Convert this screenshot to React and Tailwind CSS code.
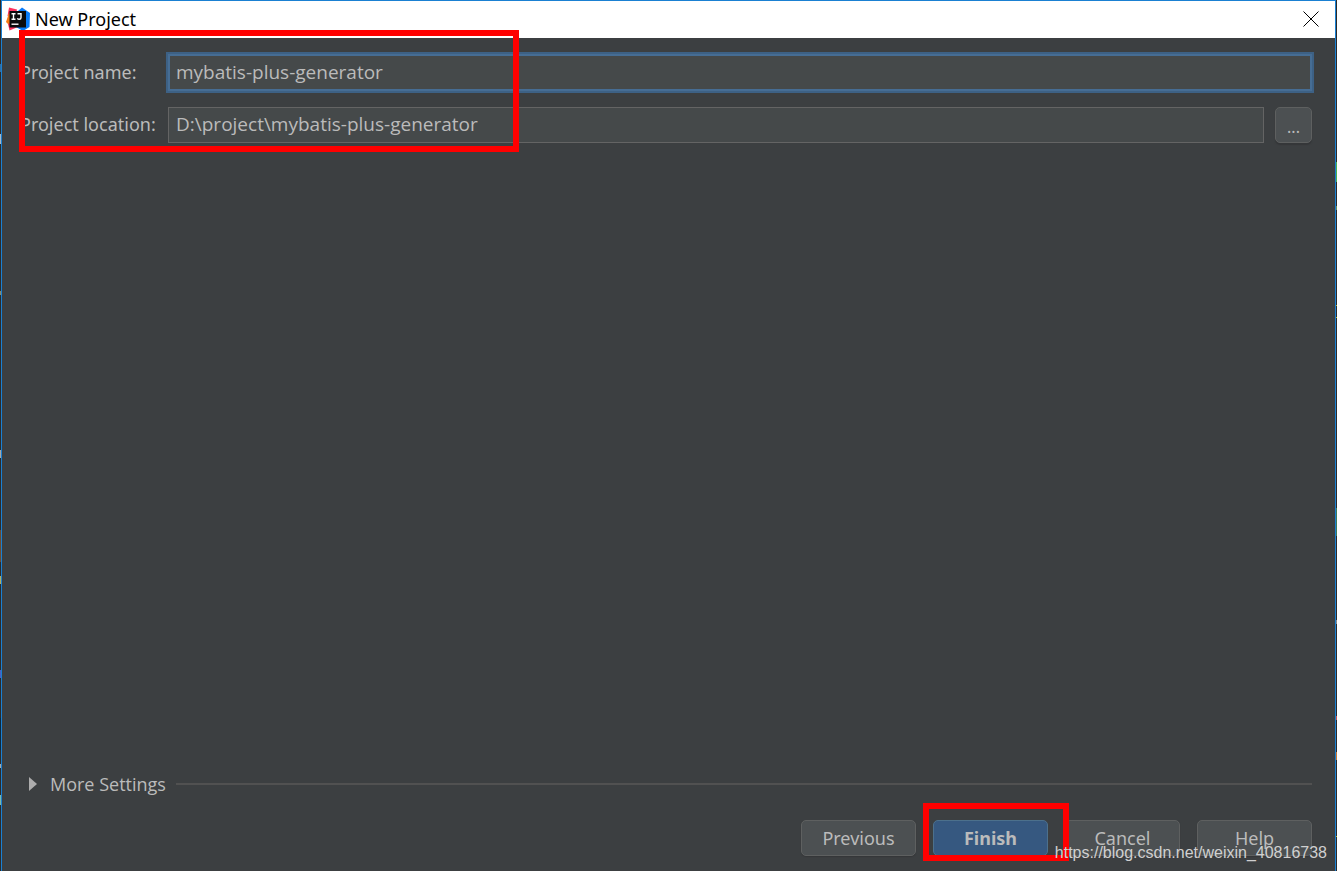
const LEFT_SPECKS = [
  'top-16 h-2 bg-[#2f6ea5]',
  'top-[134px] h-2.5 bg-[#a9b7c6]',
  'top-[291px] h-1 bg-[#8a8a6a]',
  'top-[450px] h-2 bg-[#a9a9a9]',
  'top-[530px] h-8 bg-[#6b4a2f]',
  'top-[576px] h-2 bg-[#b3ae60]',
  'top-[670px] h-2 bg-[#4a5fc4]',
  'top-[718px] h-8 bg-[#0d293e]',
  'top-[764px] h-1 bg-[#a9a9a9]',
  'top-[795px] h-2.5 bg-[#7fb8a8]',
];

const RIGHT_SPECKS = [
  'top-[162px] h-5 bg-[#4caf50]',
  'top-[206px] h-1 bg-[#6a8759]',
  'top-[305px] h-px bg-[#bbb529]',
  'top-[317px] h-px bg-[#bbb529]',
  'top-[508px] h-7 bg-[#3f7a5b]',
  'top-[620px] h-1 bg-[#8a8a8a]',
  'top-[716px] h-1 bg-[#c75450]',
  'top-[752px] h-2 bg-[#cc7832]',
  'top-[836px] h-px bg-[#bbb529]',
];

function IdeaLogo() {
  return (
    <svg width="24" height="24" viewBox="0 0 24 24" aria-hidden="true">
      <path d="M3 0.5 L11 2.5 L9 12 L1.5 9 Z" fill="#fe315d" />
      <path d="M3 6 L0 15 L5 20 L10 12 Z" fill="#f97a12" />
      <path d="M2 17 L3.5 23.5 L12 20 L8 14 Z" fill="#fe315d" />
      <path d="M12 4 L16 0.5 L24 6 L23.5 20 L17 24 L10 20 Z" fill="#087cfa" />
      <rect x="3.5" y="4" width="16.5" height="16.5" fill="#0b0b0d" />
      <path
        d="M5.5 6.8 H9.5 M7.5 6.8 V12.2 M5.5 12.2 H9.5 M11.5 6.8 H15 V10.8 Q15 12.3 13.2 12.3 Q12 12.3 11.3 11.4"
        fill="none"
        stroke="#fff"
        strokeWidth="1.4"
      />
      <path d="M5.5 17.2 H12.5" stroke="#fff" strokeWidth="1.4" />
    </svg>
  );
}

function TitleBar() {
  return (
    <header className="flex h-[37px] shrink-0 items-center gap-[5px] bg-white pb-px pl-1 pr-4">
      <IdeaLogo />
      <h1 className="flex-1 text-lg leading-6 text-black">New Project</h1>
      <button type="button" aria-label="Close">
        <svg width="16" height="16" viewBox="0 0 16 16" aria-hidden="true">
          <path d="M0.5 0.5 L15.5 15.5 M15.5 0.5 L0.5 15.5" stroke="#000" strokeWidth="1" />
        </svg>
      </button>
    </header>
  );
}

function DialogButton({ children, primary }) {
  return (
    <button
      type="button"
      className={`h-9 w-[115px] rounded-[5px] border text-lg leading-6 ${
        primary
          ? 'border-[#4c708c] bg-[#365880] font-bold'
          : 'border-[#5e6060] bg-[#4c5052] shadow-[0_1px_1px_#353739]'
      }`}
    >
      {children}
    </button>
  );
}

export default function App() {
  return (
    <div className="relative flex min-h-screen flex-col bg-[#2b2b2b] px-px font-['Noto_Sans',sans-serif] text-[#bbbbbb]">
      {/* slivers of the editor behind the dialog */}
      {LEFT_SPECKS.map((speck) => (
        <span key={speck} className={`absolute left-0 w-px ${speck}`} />
      ))}
      {RIGHT_SPECKS.map((speck) => (
        <span key={speck} className={`absolute right-0 w-px ${speck}`} />
      ))}

      <div className="flex flex-1 flex-col border border-b-0 border-[#1a80d2] bg-[#3c3f41]">
        <TitleBar />

        <main className="flex flex-1 flex-col pb-[15px] pl-[18px] pr-[23px] pt-4">
          <div className="grid grid-cols-[148px_1fr] items-center gap-y-4 text-lg leading-6">
            <label htmlFor="name" className="pb-0.5">Project name:</label>
            <input
              id="name"
              type="text"
              defaultValue="mybatis-plus-generator"
              className="h-[37px] w-full border-2 border-[#466d94] bg-[#45494a] px-1.5 pb-0.5 font-['Open_Sans',sans-serif] text-[19px] outline-2 outline-[#3d6185]"
            />

            <label htmlFor="location" className="pb-0.5">Project location:</label>
            <div className="flex gap-[11px]">
              <input
                id="location"
                type="text"
                defaultValue="D:\project\mybatis-plus-generator"
                className="h-9 min-w-0 flex-1 border border-[#646464] bg-[#45494a] px-[7px] pb-0.5 font-['Open_Sans',sans-serif] text-[19px]"
              />
              <button
                type="button"
                aria-label="Browse"
                className="h-9 w-[37px] rounded-[5px] border border-[#5e6060] bg-[#4c5052] pt-1 text-base leading-6 shadow-[0_2px_1px_#353739]"
              >
                ...
              </button>
            </div>
          </div>

          <div className="mt-auto flex items-center gap-2.5">
            <button type="button" className="flex items-center gap-[13px] pl-[9px] font-['Open_Sans',sans-serif] text-lg leading-6">
              <svg width="8" height="14" viewBox="0 0 8 14" aria-hidden="true">
                <path d="M0 0 L8 7 L0 14 Z" fill="#adadad" />
              </svg>
              More Settings
            </button>
            <hr className="flex-1 border-t-2 border-[#515151]" />
          </div>

          <footer className="mt-6 flex justify-end gap-[17px]">
            <DialogButton>Previous</DialogButton>
            <div className="relative z-10">
              <DialogButton primary>Finish</DialogButton>
              <span className="pointer-events-none absolute -bottom-[5px] -left-2.5 -right-[21px] -top-[17px] border-6 border-[#ff0000]" />
            </div>
            <DialogButton>Cancel</DialogButton>
            <DialogButton>Help</DialogButton>
          </footer>
        </main>
      </div>

      {/* highlight round both fields */}
      <div className="pointer-events-none absolute left-[19px] top-[30px] h-[122px] w-[500px] border-6 border-[#ff0000]" />

      <p className="pointer-events-none absolute bottom-1.5 right-2.5 z-20 font-['Liberation_Sans',sans-serif] text-base text-[#d0d0d0]">
        https://blog.csdn.net/weixin_40816738
      </p>
    </div>
  );
}
